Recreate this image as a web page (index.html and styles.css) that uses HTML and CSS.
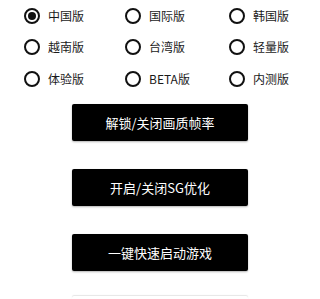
FILE: index.html
```html
<!DOCTYPE html>
<html lang="zh">
<head>
<meta charset="utf-8">
<link rel="stylesheet" href="styles.css">
</head>
<body>
<div class="page">
  <div class="radios">
    <label class="radio"><span class="dot checked"></span><span class="lbl">中国版</span></label>
    <label class="radio"><span class="dot"></span><span class="lbl">国际版</span></label>
    <label class="radio"><span class="dot"></span><span class="lbl">韩国版</span></label>
    <label class="radio"><span class="dot"></span><span class="lbl">越南版</span></label>
    <label class="radio"><span class="dot"></span><span class="lbl">台湾版</span></label>
    <label class="radio"><span class="dot"></span><span class="lbl">轻量版</span></label>
    <label class="radio"><span class="dot"></span><span class="lbl">体验版</span></label>
    <label class="radio"><span class="dot"></span><span class="lbl">BETA版</span></label>
    <label class="radio"><span class="dot"></span><span class="lbl">内测版</span></label>
  </div>
  <div class="buttons">
    <button class="btn">解锁/关闭画质帧率</button>
    <button class="btn">开启/关闭SG优化</button>
    <button class="btn">一键快速启动游戏</button>
    <button class="btn ghost"></button>
  </div>
</div>
</body>
</html>
```
FILE: styles.css
```css
html, body {
  margin: 0;
  padding: 0;
  background: #ffffff;
  overflow: hidden;
}
body {
  font-family: "Noto Sans CJK SC", "Noto Sans", sans-serif;
  color: #1a1a1a;
}
.page {
  width: 320px;
  height: 299px;
  overflow: hidden;
}
.radios {
  display: grid;
  grid-template-columns: 101px 104px auto;
  padding-left: 24px;
}
.radio {
  display: flex;
  align-items: center;
  height: 31.5px;
}
.dot {
  box-sizing: border-box;
  width: 16px;
  height: 16px;
  border: 2px solid #111;
  border-radius: 50%;
  position: relative;
  flex: none;
}
.dot.checked::after {
  content: "";
  position: absolute;
  left: 2px;
  top: 2px;
  width: 8px;
  height: 8px;
  border-radius: 50%;
  background: #111;
}
.lbl {
  margin-left: 8px;
  font-size: 12px;
  line-height: 16px;
}
.buttons {
  display: flex;
  flex-direction: column;
  align-items: center;
  gap: 28px;
  margin-top: 9px;
}
.btn {
  width: 176px;
  height: 37px;
  background: #000;
  color: #fff;
  border: none;
  border-radius: 2px;
  font-family: "Noto Sans CJK SC", "Noto Sans", sans-serif;
  font-size: 13px;
  box-shadow: 0 1px 2px rgba(0,0,0,0.3);
  padding: 0;
  flex: none;
}
.btn.ghost {
  margin-top: -3px;
  background: #fff;
  box-shadow: 0 -1px 1px rgba(0,0,0,0.1);
}
```
